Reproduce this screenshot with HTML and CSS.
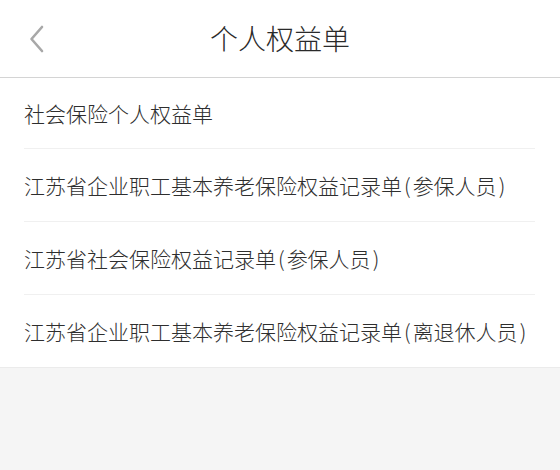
FILE: index.html
```html
<!DOCTYPE html>
<html lang="zh-CN">
<head>
<meta charset="utf-8">
<title>个人权益单</title>
<link rel="stylesheet" href="styles.css">
</head>
<body>
<div class="page">
  <header class="nav">
    <span class="back">
      <svg width="16" height="28" viewBox="0 0 16 28"><path d="M13 2 L2.5 14 L13 26" fill="none" stroke="#a8a8a8" stroke-width="2.6" stroke-linecap="round" stroke-linejoin="round"/></svg>
    </span>
    <h1 class="title">个人权益单</h1>
  </header>
  <ul class="list">
    <li class="item">社会保险个人权益单</li>
    <li class="item">江苏省企业职工基本养老保险权益记录单<span class="p">(</span>参保人员<span class="p">)</span></li>
    <li class="item">江苏省社会保险权益记录单<span class="p">(</span>参保人员<span class="p">)</span></li>
    <li class="item">江苏省企业职工基本养老保险权益记录单<span class="p">(</span>离退休人员<span class="p">)</span></li>
  </ul>
</div>
</body>
</html>
```

FILE: styles.css
```css
html, body {
  margin: 0;
  padding: 0;
  background: #f5f5f5;
  font-family: "Noto Sans CJK SC", "Noto Sans", sans-serif;
  color: #333;
}
.page {
  width: 560px;
  height: 470px;
  background: #f5f5f5;
}
.nav {
  position: relative;
  height: 77px;
  background: #fff;
  border-bottom: 1px solid #d4d4d4;
  display: flex;
  align-items: center;
  justify-content: center;
}
.back {
  position: absolute;
  left: 29px;
  top: 25px;
  width: 16px;
  height: 28px;
  display: flex;
}
.title {
  margin: 0;
  font-size: 28px;
  font-weight: 300;
  color: #2a2a2a;
  line-height: 1;
  padding-bottom: 1px;
}
.list {
  list-style: none;
  margin: 0;
  padding: 0 25px 0 24px;
  background: #fff;
  border-bottom: 1px solid #ebebeb;
}
.item {
  height: 73px;
  display: flex;
  align-items: center;
  font-size: 21px;
  font-weight: 300;
  color: #2e2e2e;
  border-bottom: 1px solid #f0f0f0;
  box-sizing: border-box;
}
.item:first-child {
  height: 71px;
}
.item:last-child {
  height: 72px;
  border-bottom: none;
}
.p {
  padding: 0 2px;
}
```
